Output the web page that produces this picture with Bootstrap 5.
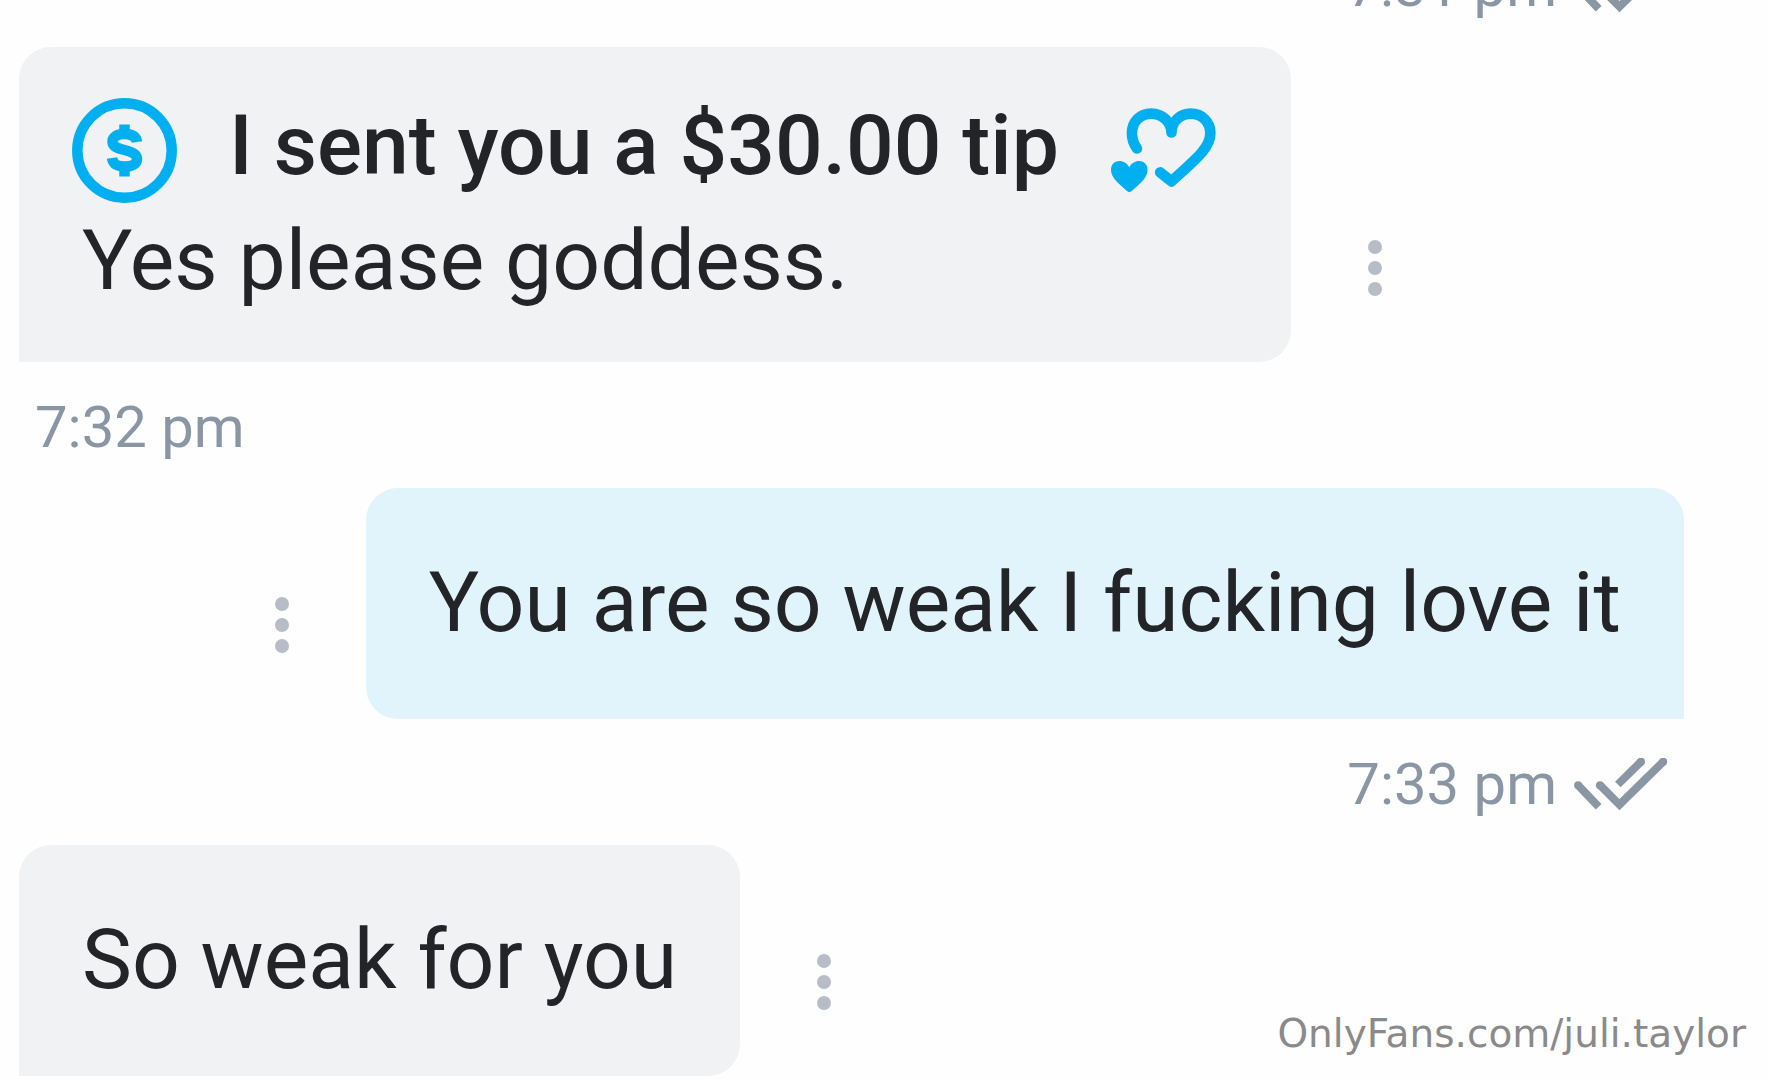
<!DOCTYPE html>
<html lang="en">
<head>
<meta charset="utf-8">
<meta name="viewport" content="width=device-width, initial-scale=1">
<title>Messages</title>
<link href="https://cdn.jsdelivr.net/npm/bootstrap@5.3.0/dist/css/bootstrap.min.css" rel="stylesheet">
<style>
body { font-family: Roboto, "Liberation Sans", sans-serif; color: #222428; background: #fefefe; }
.chat { padding: 0 84px 4px 19px; }
.bubble { font-size: 84px; line-height: 100px; border-radius: 32px; white-space: nowrap; }
.bubble-in { background: #f1f2f4; border-bottom-left-radius: 0; }
.bubble-out { background: #e1f4fc; border-bottom-right-radius: 0; }
.bubble-text { padding: 65px 63px 66px; }
.tip-line { height: 122px; margin-top: 42px; padding: 0 75px 0 53px; gap: 52px; }
.tip-title { font-weight: 500; padding-bottom: 8px; }
.tip-note { padding: 0 63px 51px; }
.stamp { font-size: 58px; line-height: 68px; color: #8a96a3; padding: 31px 16px 27px; gap: 16px; }
.dots-btn { width: 44px; height: 84px; margin: 0 62px 52px; color: #b7bdc7; }
.site-mark { right: 22px; bottom: 16px; font: 39px/60px "DejaVu Sans", sans-serif; color: #8a8a8a; }
</style>
</head>
<body>
<svg class="d-none" aria-hidden="true">
  <symbol id="dots" viewBox="0 0 14 56"><g fill="currentColor"><circle cx="7" cy="7" r="7"/><circle cx="7" cy="28" r="7"/><circle cx="7" cy="49" r="7"/></g></symbol>
  <symbol id="seen" viewBox="820 861 286 160"><g fill="none" stroke="currentColor" stroke-width="24"><path d="M835 943 897 1008M901 943 960 1002 1092 872M955 941 1025 872"/></g><g fill="currentColor"><circle cx="835" cy="943" r="12"/><circle cx="901" cy="943" r="12"/><circle cx="1092" cy="872" r="12"/><circle cx="1025" cy="872" r="12"/></g></symbol>
</svg>
<main class="chat vh-100 overflow-hidden position-relative d-flex flex-column justify-content-end">
  <div class="stamp d-flex flex-shrink-0 justify-content-end align-items-center"><time>7:31 pm</time><svg width="95" height="53"><use href="#seen"/></svg></div>

  <div class="d-flex flex-shrink-0 align-items-end">
    <div class="bubble bubble-in d-flex flex-column">
      <div class="tip-line d-flex align-items-center">
        <svg class="flex-shrink-0" width="105" height="105" viewBox="0 0 105 105" fill="none" stroke="#00aff0" stroke-width="10.500"><circle cx="52.5" cy="52.5" r="47.2"/><path d="M65 44C64 38 59 36 52.5 36C45 36 40.500 39 40.500 43.500C40.500 49 46 50.500 52.500 52C60 54 65 56 65 61C65 66 60 68.500 52.500 68.500C45 68.500 41 66 40 60"/><path d="M52.500 26.500V38M52.500 67V78.500"/></svg>
        <span class="tip-title">I sent you a $30.00 tip</span>
        <svg class="flex-shrink-0" width="105" height="105" viewBox="95 84 316 316"><path d="M173 236C163 222 158 208 158 190C158 155 183 131 216 131C248 131 277 155 277 188C277 155 303 131 335 131C369 131 394 156 394 190C394 234 350 268 277 335L243 308" fill="none" stroke="#00aff0" stroke-width="32" stroke-linecap="round" stroke-linejoin="round"/><path d="M150 293C139 266 95 265 95 301C95 326 121 344 143 364Q150 371 157 364C180 344 205 326 205 301C205 265 161 266 150 293Z" fill="#00aff0"/></svg>
      </div>
      <div class="tip-note">Yes please goddess.</div>
    </div>
    <button class="dots-btn btn p-0 border-0" type="button" aria-label="Message options"><svg class="d-block mx-auto" width="14" height="56"><use href="#dots"/></svg></button>
  </div>
  <div class="stamp d-flex flex-shrink-0"><time>7:32 pm</time></div>

  <div class="d-flex flex-shrink-0 align-items-end justify-content-end">
    <button class="dots-btn btn p-0 border-0" type="button" aria-label="Message options"><svg class="d-block mx-auto" width="14" height="56"><use href="#dots"/></svg></button>
    <div class="bubble bubble-out bubble-text">You are so weak I fucking love it</div>
  </div>
  <div class="stamp d-flex flex-shrink-0 justify-content-end align-items-center"><time>7:33 pm</time><svg width="95" height="53"><use href="#seen"/></svg></div>

  <div class="d-flex flex-shrink-0 align-items-end">
    <div class="bubble bubble-in bubble-text">So weak for you</div>
    <button class="dots-btn btn p-0 border-0" type="button" aria-label="Message options"><svg class="d-block mx-auto" width="14" height="56"><use href="#dots"/></svg></button>
  </div>
  <div class="site-mark position-absolute">OnlyFans.com/juli.taylor</div>
</main>
<script src="https://cdn.jsdelivr.net/npm/bootstrap@5.3.0/dist/js/bootstrap.bundle.min.js"></script>
</body>
</html>
